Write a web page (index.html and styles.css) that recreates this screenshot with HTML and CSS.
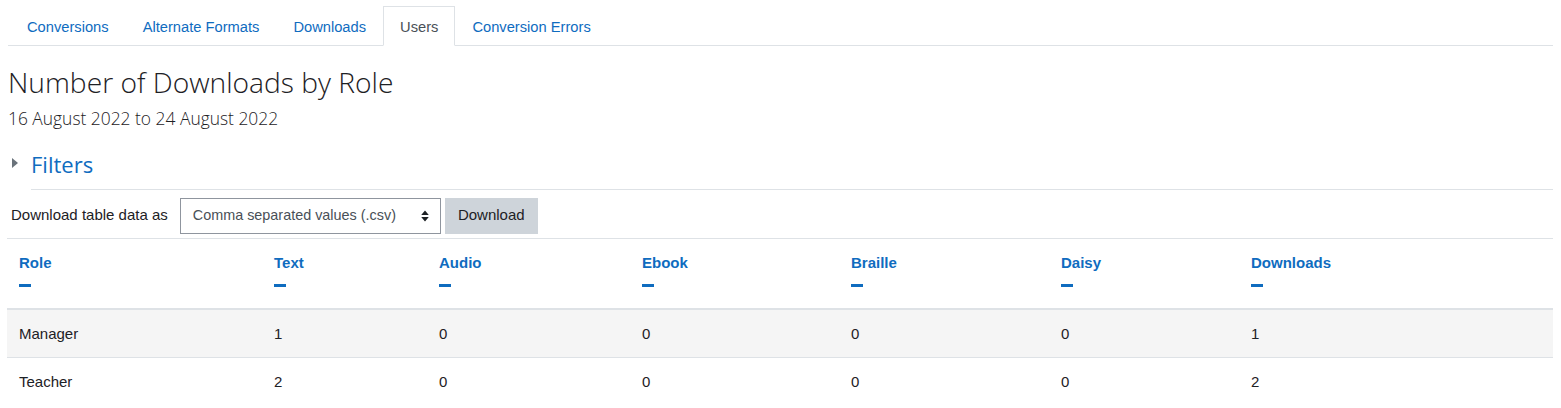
FILE: index.html
```html
<!DOCTYPE html>
<html lang="en">
<head>
<meta charset="utf-8">
<title>Number of Downloads by Role</title>
<link rel="stylesheet" href="styles.css">
</head>
<body>
<div class="page">
  <ul class="tabs">
    <li class="tab"><a href="#">Conversions</a></li>
    <li class="tab"><a href="#">Alternate Formats</a></li>
    <li class="tab"><a href="#">Downloads</a></li>
    <li class="tab active"><a href="#">Users</a></li>
    <li class="tab"><a href="#">Conversion Errors</a></li>
  </ul>

  <h2 class="title">Number of Downloads by Role</h2>
  <div class="daterange">16 August 2022 to 24 August 2022</div>

  <div class="filters">
    <span class="caret"></span>
    <div class="filters-head"><a href="#">Filters</a></div>
  </div>

  <form class="dl-form">
    <label class="dl-label">Download table data as</label>
    <div class="select">
      <span>Comma separated values (.csv)</span>
      <svg class="updown" width="8" height="12" viewBox="0 0 8 12"><path d="M4 0.5 L7.8 5 H0.2 Z M4 11.5 L7.8 7 H0.2 Z" fill="#1d2125"/></svg>
    </div>
    <button type="button" class="btn">Download</button>
  </form>

  <table class="report">
    <colgroup>
      <col class="c1"><col class="c2"><col class="c3"><col class="c4"><col class="c5"><col class="c6"><col class="c7">
    </colgroup>
    <thead>
      <tr>
        <th><a href="#">Role</a><span class="dash"></span></th>
        <th><a href="#">Text</a><span class="dash"></span></th>
        <th><a href="#">Audio</a><span class="dash"></span></th>
        <th><a href="#">Ebook</a><span class="dash"></span></th>
        <th><a href="#">Braille</a><span class="dash"></span></th>
        <th><a href="#">Daisy</a><span class="dash"></span></th>
        <th><a href="#">Downloads</a><span class="dash"></span></th>
      </tr>
    </thead>
    <tbody>
      <tr class="odd">
        <td>Manager</td><td>1</td><td>0</td><td>0</td><td>0</td><td>0</td><td>1</td>
      </tr>
      <tr>
        <td>Teacher</td><td>2</td><td>0</td><td>0</td><td>0</td><td>0</td><td>2</td>
      </tr>
    </tbody>
  </table>
</div>
</body>
</html>
```

FILE: styles.css
```css
* { box-sizing: border-box; }
html, body { margin: 0; padding: 0; background: #fff; }
body {
  font-family: "Liberation Sans", Arial, sans-serif;
  font-size: 15px;
  line-height: 1.5;
  color: #1d2125;
}
a { color: #0f6cbf; text-decoration: none; }

.page { padding: 6px 8px 0 8px; }

.tabs {
  list-style: none;
  margin: 0;
  padding: 0 0 0 2px;
  display: flex;
  border-bottom: 1px solid #dee2e6;
}
.tab { margin-bottom: -1px; }
.tab a {
  display: block;
  padding: 9px 16px 7px;
  border: 1px solid transparent;
  font-size: 14.7px;
  line-height: 22px;
}
.tab.active a {
  color: #495057;
  background: #fff;
  border-color: #dee2e6 #dee2e6 #fff;
}

.title {
  font-family: "Open Sans", sans-serif;
  font-weight: 300;
  font-size: 28.2px;
  line-height: 36px;
  margin: 18px 0 0 0;
  color: #1d2125;
}
.daterange {
  font-family: "Open Sans", sans-serif;
  font-weight: 300;
  font-size: 17.4px;
  line-height: 26px;
  margin-top: 5px;
  color: #1d2125;
}

.filters {
  display: flex;
  align-items: flex-start;
  margin-top: 19px;
}
.caret {
  width: 0; height: 0;
  border-top: 5.5px solid transparent;
  border-bottom: 5.5px solid transparent;
  border-left: 6px solid #6a737b;
  margin: 8px 0 0 4px;
}
.filters-head {
  flex: 1;
  margin-left: 13px;
  border-bottom: 1px solid #dee2e6;
  padding-bottom: 9px;
}
.filters-head a {
  font-family: "Open Sans", sans-serif;
  font-size: 22px;
  line-height: 28px;
}

.dl-form {
  display: flex;
  align-items: center;
  margin-top: 8px;
  padding-bottom: 4px;
}
.dl-label { margin: 0 12px 0 3px; }
.select {
  width: 261px;
  height: 36px;
  border: 1px solid #8f959e;
  display: flex;
  align-items: center;
  justify-content: space-between;
  padding: 0 11px 0 12px;
  color: #495057;
  font-size: 14.4px;
}
.updown { display: block; }
.btn {
  margin-left: 4px;
  height: 36px;
  width: 93px;
  padding: 0;
  border: 0;
  background: #ced4da;
  color: #1d2125;
  font: inherit;
}

.report {
  width: 1546px;
  border-collapse: collapse;
  table-layout: fixed;
  margin-left: -1px;
}
.c1 { width: 255px; }
.c2 { width: 165px; }
.c3 { width: 203px; }
.c4 { width: 209px; }
.c5 { width: 210px; }
.c6 { width: 190px; }
.c7 { width: 314px; }

.report th, .report td {
  text-align: left;
  padding: 13px 12px 12px;
  vertical-align: top;
  border-top: 1px solid #dee2e6;
}
.report th {
  font-weight: 700;
  border-bottom: 2px solid #dee2e6;
}
.report th a { display: block; line-height: 22px; }
.dash {
  display: block;
  width: 12px;
  height: 3px;
  background: #0f6cbf;
  margin: 10px 0 9px 0;
}
.report thead + tbody tr:first-child td { border-top: 0; }
.report td { line-height: 22px; }
.report tr.odd td { background: #f5f5f5; }
```
